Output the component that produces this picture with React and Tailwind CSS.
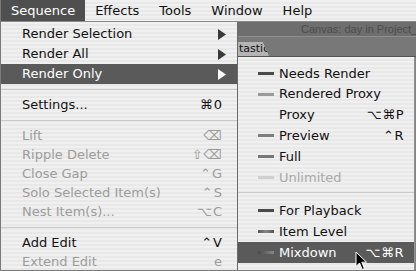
import React from "react";

const FONT = { fontFamily: '"DejaVu Sans", "Liberation Sans", sans-serif' };

function Arrow({ white }) {
  return (
    <svg width="8" height="11" viewBox="0 0 8 11" className="mr-[11px]">
      <path d="M0 0 L8 5.5 L0 11 Z" fill={white ? "#ffffff" : "#3a3a3a"} />
    </svg>
  );
}

function MainItem({ label, right, arrow, hi, dis, h = "h-[19px]" }) {
  return (
    <div
      className={`${h} flex items-center justify-between pl-[21px] ${
        hi ? "bg-[#5a5a5a] text-white" : dis ? "text-[#9c9c9c]" : "text-[#111]"
      }`}
    >
      <span className="whitespace-nowrap">{label}</span>
      {arrow ? (
        <Arrow white={hi} />
      ) : (
        <span className="pr-[14px] whitespace-nowrap tracking-[1px]">{right}</span>
      )}
    </div>
  );
}

function Sep({ h }) {
  return (
    <div className={`${h} flex items-center`}>
      <div className="h-px w-full bg-[#c9c9c9]" />
    </div>
  );
}

function SubItem({ label, right, dash, hi, dis }) {
  return (
    <div
      className={`h-[20.8px] flex items-center ${
        hi ? "bg-[#5a5a5a] text-white" : dis ? "text-[#a8a8a8]" : "text-[#111]"
      }`}
    >
      <div className="w-[21px] ml-[20px] flex items-center">
        {dash ? <div className={`h-[3px] w-[16px] ${dash}`} /> : null}
      </div>
      <span className="whitespace-nowrap">{label}</span>
      <span className="ml-auto pr-[10px] whitespace-nowrap tracking-[0.5px]">{right}</span>
    </div>
  );
}

const stripes =
  "bg-[repeating-linear-gradient(to_bottom,#f0f0f0_0px,#f0f0f0_2px,#e8e8e8_2px,#e8e8e8_4px)]";

export default function App() {
  return (
    <div
      className="relative w-[416px] h-[271px] overflow-hidden flex flex-col bg-[#7a7a7a] text-[13px] border-l border-b border-[#7a7a7a]"
      style={FONT}
    >
      {/* menu bar */}
      <div className={`h-[22px] flex items-stretch border-b border-[#8a8a8a] ${stripes} text-[#111]`}>
        <div className="flex items-center px-[10px] bg-[#4f4f4f] text-white">Sequence</div>
        <div className="flex items-center px-[10px]">Effects</div>
        <div className="flex items-center px-[10px]">Tools</div>
        <div className="flex items-center px-[10px]">Window</div>
        <div className="flex items-center px-[10px]">Help</div>
      </div>

      <div className="flex flex-1 min-h-0">
        {/* main menu */}
        <div className={`w-[237px] shrink-0 pt-[2px] border-r border-[#6a6a6a] ${stripes}`}>
          <MainItem label="Render Selection" arrow h="h-[20px]" />
          <MainItem label="Render All" arrow h="h-[20px]" />
          <MainItem label="Render Only" arrow hi h="h-[20px]" />
          <Sep h="h-[11px]" />
          <MainItem label="Settings..." right="⌘0" h="h-[20px]" />
          <Sep h="h-[11px]" />
          <MainItem label="Lift" right="⌫" dis />
          <MainItem label="Ripple Delete" right="⇧⌫" dis />
          <MainItem label="Close Gap" right="⌃G" dis />
          <MainItem label="Solo Selected Item(s)" right="⌃S" dis />
          <MainItem label="Nest Item(s)..." right="⌥C" dis />
          <Sep h="h-[12px]" />
          <MainItem label="Add Edit" right="⌃V" />
          <MainItem label="Extend Edit" right="e" dis />
        </div>

        {/* right side: window behind + submenu */}
        <div className="flex-1 flex flex-col min-w-0">
          <div
            className="h-[14px] bg-[#6e6e6e] flex items-center pl-[63px] text-[11px] text-[#4c4c4c] whitespace-nowrap overflow-hidden"
            style={{ fontFamily: '"Liberation Sans", sans-serif' }}
          >
            Canvas: day in Project_
          </div>
          <div className="h-px bg-[#8e8e8e]" />
          <div className="h-[19px] bg-[#787878] flex items-end">
            <div className="h-[14px] w-[31px] bg-[#b4b4b4] [clip-path:polygon(0_0,80%_0,100%_100%,0_100%)] text-[11px] text-[#111] flex items-center pl-[1px]">
              tastic
            </div>
          </div>
          <div className="h-px bg-[#555555]" />
          <div className="flex-1 flex">
            <div className={`w-[176px] pt-[6px] ${stripes}`}>
              <SubItem label="Needs Render" dash="bg-[#4a4a4a]" />
              <SubItem label="Rendered Proxy" dash="bg-[#9a9a9a]" />
              <SubItem label="Proxy" right="⌥⌘P" />
              <SubItem label="Preview" right="⌃R" dash="bg-[#7e7e7e]" />
              <SubItem label="Full" dash="bg-[#777777]" />
              <SubItem label="Unlimited" dash="bg-[#d0d0d0]" dis />
              <div className="h-[12.8px] flex items-start pt-[4px]">
                <div className="h-px w-full bg-[#c9c9c9]" />
              </div>
              <SubItem label="For Playback" dash="bg-[#4a4a4a]" />
              <SubItem label="Item Level" dash="bg-[linear-gradient(to_right,#555,#888,#555)]" />
              <SubItem label="Mixdown" right="⌥⌘R" dash="bg-[linear-gradient(to_right,#4a4a4a,#888)]" hi />
            </div>
            <div className="flex-1 bg-[linear-gradient(to_right,#9a9a9a,#7a7a7a)]" />
          </div>
        </div>
      </div>

      {/* mouse cursor */}
      <svg
        className="absolute left-[354px] top-[251px]"
        width="13"
        height="20"
        viewBox="0 0 13 20"
      >
        <path
          d="M1 1 L1 15.5 L4.5 12 L7.2 18.5 L9.4 17.6 L6.8 11.2 L11.5 11.2 Z"
          fill="#000"
          stroke="#fff"
          strokeWidth="1"
          strokeLinejoin="round"
        />
      </svg>
    </div>
  );
}
